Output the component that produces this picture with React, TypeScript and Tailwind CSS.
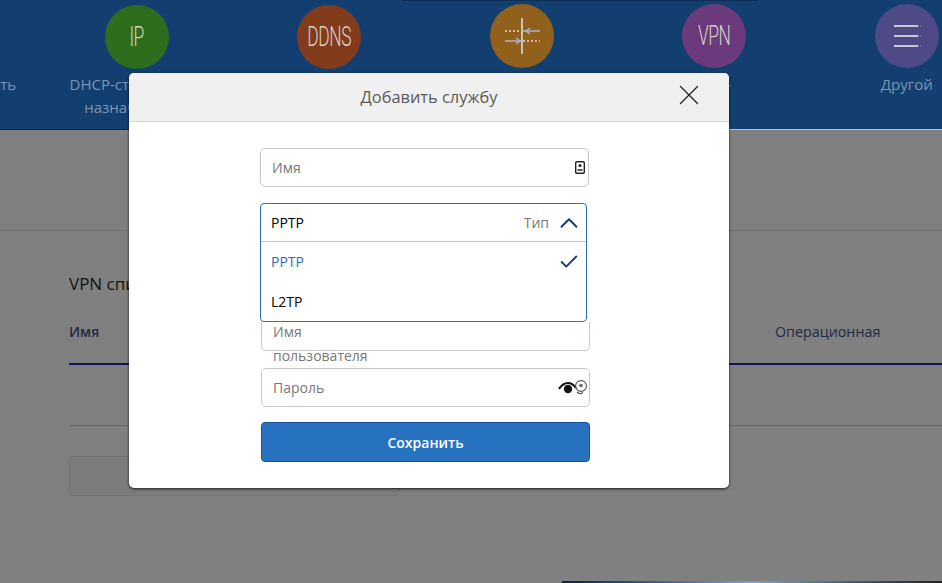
import { X, ChevronUp, Check } from "lucide-react";

const font = { fontFamily: '"Open Sans", "Noto Sans", sans-serif' };

function MenuCircle({ color, label, low, children }: { color: string; label: string; low?: boolean; children?: React.ReactNode }) {
  return (
    <div className="w-[192.5px] shrink-0 flex flex-col items-center pt-[4px]">
      <div className={`w-[64px] h-[64px] rounded-full flex items-center justify-center overflow-hidden ${low ? "translate-y-px" : ""} ${color}`}>
        {children}
      </div>
      <div className="mt-[5px] text-[15px] leading-[23px] text-[#7c93b4] text-center w-[170px]">{label}</div>
    </div>
  );
}

function CircleText({ children }: { children: string }) {
  return (
    <span className="scale-x-[0.62] text-[28px] font-light text-[#d5d0c4] tracking-tight" style={{ fontFamily: "Roboto, sans-serif" }}>
      {children}
    </span>
  );
}

function ForwardIcon() {
  return (
    <svg width="44" height="44" viewBox="0 0 44 44" fill="none">
      <path d="M22 4V40" stroke="#c9c3b4" strokeWidth="2" />
      <path d="M5 17H21" stroke="#e0d8c0" strokeWidth="1.5" strokeDasharray="2 2" />
      <path d="M23 17H40" stroke="#a8b4d0" strokeWidth="1.5" />
      <path d="M30 14L26 17L30 20" stroke="#a8b4d0" strokeWidth="1.5" />
      <path d="M5 27H21" stroke="#a8b4d0" strokeWidth="1.5" />
      <path d="M16 24L20 27L16 30" stroke="#a8b4d0" strokeWidth="1.5" />
      <path d="M23 27H40" stroke="#e0d8c0" strokeWidth="1.5" strokeDasharray="2 2" />
    </svg>
  );
}

function BurgerIcon() {
  return (
    <svg width="30" height="24" viewBox="0 0 30 24" fill="none">
      <path d="M2 2H26M2 12H26M2 22H26" stroke="#c9c8d2" strokeWidth="1.8" />
      <path d="M26 2H29M26 12H29M26 22H29" stroke="#8c8aa8" strokeWidth="1.2" strokeDasharray="1 1" />
    </svg>
  );
}

function ContactIcon() {
  return (
    <svg width="10" height="13" viewBox="0 0 10 13" fill="none">
      <rect x="0.7" y="0.7" width="8.6" height="11.6" rx="1" stroke="#222" strokeWidth="1.4" />
      <circle cx="5" cy="4.6" r="1.5" fill="#222" />
      <path d="M2.4 9H7.6" stroke="#222" strokeWidth="1.6" />
    </svg>
  );
}

function EyeIcon() {
  return (
    <svg width="30" height="18" viewBox="0 0 30 18" fill="none">
      <path d="M1 10C4 5.5 7 4 10 4C13 4 15.5 5.5 18 9" stroke="#111" strokeWidth="2" />
      <circle cx="10" cy="10" r="4.2" fill="#111" />
      <circle cx="23" cy="7" r="5.4" stroke="#555" strokeWidth="1.1" />
      <circle cx="23" cy="6.5" r="1.8" fill="#666" />
      <path d="M19 13C21 15 23 15 25 13.5" stroke="#555" strokeWidth="1.1" />
    </svg>
  );
}

export default function App() {
  return (
    <div className="relative w-[942px] h-[583px] overflow-hidden bg-[#808080] flex flex-col" style={font}>
      {/* top menu */}
      <div className="h-[130px] shrink-0 bg-[#123f6f] border-b border-[#c4c4c4] flex -ml-[152px]">
        <MenuCircle color="bg-transparent" label="Работоспособность" />
        <MenuCircle color="bg-[#2c6d1e]" label="DHCP-статическое назначение IP" low>
          <CircleText>IP</CircleText>
        </MenuCircle>
        <MenuCircle color="bg-[#823c1c]" label="DDNS" low>
          <CircleText>DDNS</CircleText>
        </MenuCircle>
        <MenuCircle color="bg-[#91601a]" label="Перенаправление">
          <ForwardIcon />
        </MenuCircle>
        <MenuCircle color="bg-[#6b3a7c]" label="VPN-">
          <CircleText>VPN</CircleText>
        </MenuCircle>
        <MenuCircle color="bg-[#4d4a86]" label="Другой">
          <BurgerIcon />
        </MenuCircle>
      </div>
      <div className="absolute left-[403px] top-0 w-[354px] h-px bg-[#0b2c55]" />
      <div className="absolute left-0 top-[129px] w-[129px] h-px bg-[#0b2450]" />

      {/* page under the dialog */}
      <div className="h-[101px] shrink-0 border-b border-[#6e6e6e]" />
      <div className="pl-[69px]">
        <div className="mt-[41px] text-[17px] leading-[24px] font-medium text-[#141414]">VPN список</div>
        <div className="mt-[25px] h-[44px] flex justify-between border-b-2 border-[#14145a] text-[14px] font-semibold text-[#1f2a44]">
          <span className="leading-[20px] pt-[1px]">Имя</span>
          <span className="leading-[20px] pt-[1px] font-normal text-[14.3px] w-[167px]">Операционная</span>
        </div>
        <div className="h-[61px] border-b border-[#686868]" />
        <div className="mt-[30px] w-[331px] h-[40px] rounded border border-[#747474] bg-[#7c7c7c]" />
      </div>
      <div className="mt-auto ml-[562px] h-[2px] bg-gradient-to-r from-[#0a1f55] via-[#6fa6d8] to-[#222]" />

      {/* dialog */}
      <div className="absolute left-[129px] top-[73px] w-[600px] h-[415px] rounded-[5px] bg-white overflow-hidden shadow-[0_1px_3px_rgba(0,0,0,0.8)]">
        <div className="relative h-[49px] bg-[#f0f0f0] border-b border-[#d8d8d8] flex items-center justify-center">
          <span className="text-[16.4px] text-[#5a5a5a]">Добавить службу</span>
          <X className="absolute right-[23px] top-[5px]" size={34} strokeWidth={0.9} color="#222" />
        </div>
        <div className="pl-[131px] pt-[26px] w-[462px] flex flex-col text-[14px]">
          <div className="h-[39px] w-[329px] rounded-[5px] border border-[#c8c8c8] flex items-center justify-between pl-[11px] pr-[3px]">
            <span className="text-[#777]">Имя</span>
            <ContactIcon />
          </div>

          <div className="mt-[16px] w-[327px] h-[119px] rounded-[4px] border border-[#2a6fb8] flex flex-col relative z-10 bg-white">
            <div className="h-[38px] shrink-0 border-b border-[#c4c4c4] flex items-center pl-[10px] pr-[2px]">
              <span className="text-black">PPTP</span>
              <span className="ml-auto text-[#777] mr-[5px]">Тип</span>
              <ChevronUp size={30} strokeWidth={1.5} color="#143a78" />
            </div>
            <div className="h-[40px] flex items-center justify-between pl-[10px] pr-[6px]">
              <span className="text-[#2f6db5]">PPTP</span>
              <Check size={22} strokeWidth={2} color="#143a78" />
            </div>
            <div className="h-[40px] flex items-center pl-[10px]">
              <span className="text-black">L2TP</span>
            </div>
          </div>

          <div className="ml-px w-[329px] h-[29px] rounded-b-[5px] border border-t-0 border-[#c8c8c8] pl-[11px] leading-[24px] text-[#777]">
            <div className="-mt-[2px]">
              Имя
              <br />
              пользователя
            </div>
          </div>

          <div className="mt-[17px] ml-px w-[329px] h-[39px] rounded-[5px] border border-[#c8c8c8] flex items-center justify-between pl-[11px] pr-[1px]">
            <span className="text-[#777]">Пароль</span>
            <EyeIcon />
          </div>

          <button className="mt-[15px] ml-px w-[329px] h-[40px] rounded-[4px] bg-[#2872c2] border border-[#1a4f94] text-white font-semibold text-[14px]">
            Сохранить
          </button>
        </div>
      </div>
    </div>
  );
}
